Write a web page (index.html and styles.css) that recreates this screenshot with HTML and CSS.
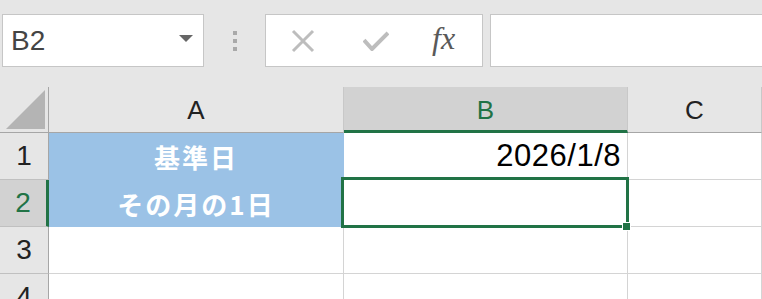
FILE: index.html
```html
<!DOCTYPE html>
<html lang="ja">
<head>
    <meta charset="UTF-8">
    <meta name="viewport" content="width=device-width, initial-scale=1.0">
    <title>Sheet</title>
    <link rel="stylesheet" href="styles.css">
</head>
<body>
    <div class="formula-bar">
        <div class="name-box">
            <span class="name">B2</span>
            <span class="arrow"></span>
        </div>
        <div class="grip">
            <span></span><span></span><span></span>
        </div>
        <div class="fx-buttons">
            <svg class="icon" width="24" height="24" viewBox="0 0 24 24">
                <path d="M2 2 L22 22 M22 2 L2 22" stroke="#bdbdbd" stroke-width="3" fill="none"/>
            </svg>
            <svg class="icon" width="26" height="20" viewBox="0 0 26 20">
                <path d="M1 9 L9 18 L25 2" stroke="#bdbdbd" stroke-width="4" fill="none"/>
            </svg>
            <span class="fx">fx</span>
        </div>
        <div class="formula-input"></div>
    </div>

    <div class="sheet">
        <div class="corner"><span class="triangle"></span></div>
        <div class="col-head">A</div>
        <div class="col-head active">B</div>
        <div class="col-head">C</div>

        <div class="row-head">1</div>
        <div class="cell label">基準日</div>
        <div class="cell value">2026/1/8</div>
        <div class="cell"></div>

        <div class="row-head active">2</div>
        <div class="cell label">その月の1日</div>
        <div class="cell selected"><span class="handle"></span></div>
        <div class="cell"></div>

        <div class="row-head">3</div>
        <div class="cell"></div>
        <div class="cell"></div>
        <div class="cell"></div>

        <div class="row-head">4</div>
        <div class="cell"></div>
        <div class="cell"></div>
        <div class="cell"></div>
    </div>
</body>
</html>
```

FILE: styles.css
```css
body {
    margin: 0;
    background-color: #e6e6e6;
    font-family: "Liberation Sans", "Noto Sans CJK JP", sans-serif;
    overflow: hidden;
    height: 299px;
}
.formula-bar {
    display: flex;
    padding-top: 14px;
    height: 53px;
}
.name-box {
    box-sizing: border-box;
    margin-left: 2px;
    width: 202px;
    height: 53px;
    background-color: #fff;
    border: 1px solid #c6c6c6;
    display: flex;
    align-items: center;
    justify-content: space-between;
    padding: 0 10px 0 8px;
}
.name {
    font-size: 28px;
    color: #444;
    font-weight: 300;
}
.arrow {
    width: 0;
    height: 0;
    border-left: 7px solid transparent;
    border-right: 7px solid transparent;
    border-top: 7px solid #666;
    margin-top: -4px;
}
.grip {
    width: 61px;
    display: flex;
    flex-direction: column;
    align-items: center;
    justify-content: center;
    gap: 4px;
}
.grip span {
    width: 4px;
    height: 4px;
    background-color: #a9a9a9;
}
.fx-buttons {
    box-sizing: border-box;
    width: 218px;
    height: 53px;
    background-color: #fff;
    border: 1px solid #c6c6c6;
    display: flex;
    align-items: center;
    padding-left: 25px;
    gap: 48px;
}
.fx {
    font-family: "Liberation Serif", serif;
    font-style: italic;
    font-size: 32px;
    color: #595959;
    margin-left: -5px;
    margin-top: -4px;
}
.formula-input {
    box-sizing: border-box;
    flex: 1;
    margin-left: 7px;
    height: 53px;
    background-color: #fff;
    border: 1px solid #c6c6c6;
    border-right: none;
}
.sheet {
    margin-top: 20px;
    display: grid;
    grid-template-columns: 49px 295px 284px 1fr;
    grid-template-rows: 46px 47px 47px 47px 47px;
    background-color: #fff;
}
.corner {
    background-color: #e6e6e6;
    border-right: 1px solid #a6a6a6;
    border-bottom: 1px solid #a6a6a6;
    display: flex;
    align-items: flex-end;
    justify-content: flex-end;
    padding: 0 3px 3px 0;
}
.triangle {
    width: 0;
    height: 0;
    border-left: 39px solid transparent;
    border-bottom: 39px solid #b4b4b4;
}
.col-head {
    background-color: #e6e6e6;
    border-right: 1px solid #c8c8c8;
    border-bottom: 1px solid #a6a6a6;
    display: flex;
    align-items: center;
    justify-content: center;
    font-size: 26px;
    color: #222;
    padding-top: 1px;
}
.col-head.active {
    background-color: #d2d2d2;
    color: #217346;
    border-bottom: 3px solid #217346;
    padding-top: 3px;
}
.row-head {
    background-color: #e6e6e6;
    border-right: 1px solid #a6a6a6;
    border-bottom: 1px solid #c0c0c0;
    display: flex;
    align-items: center;
    justify-content: center;
    font-size: 28px;
    color: #222;
}
.row-head.active {
    background-color: #d2d2d2;
    color: #217346;
    border-right: 3px solid #217346;
}
.cell {
    border-right: 1px solid #d4d4d4;
    border-bottom: 1px solid #d4d4d4;
    display: flex;
    align-items: center;
    font-size: 31px;
    color: #000;
}
.cell.label {
    background-color: #9bc2e6;
    border-right-color: #9bc2e6;
    border-bottom-color: #9bc2e6;
    justify-content: center;
    color: #fff;
    font-weight: bold;
    font-family: "Noto Sans CJK JP", sans-serif;
    font-size: 26px;
    letter-spacing: 2px;
}
.cell.value {
    justify-content: flex-end;
    padding-right: 6px;
    letter-spacing: 0.5px;
}
.cell.selected {
    position: relative;
}
.cell.selected::after {
    content: "";
    position: absolute;
    top: -3px;
    left: -3px;
    right: -2px;
    bottom: -2px;
    border: 3px solid #217346;
}
.handle {
    position: absolute;
    right: -4px;
    bottom: -5px;
    width: 7px;
    height: 7px;
    background-color: #217346;
    border: 1px solid #fff;
    z-index: 1;
}
```
